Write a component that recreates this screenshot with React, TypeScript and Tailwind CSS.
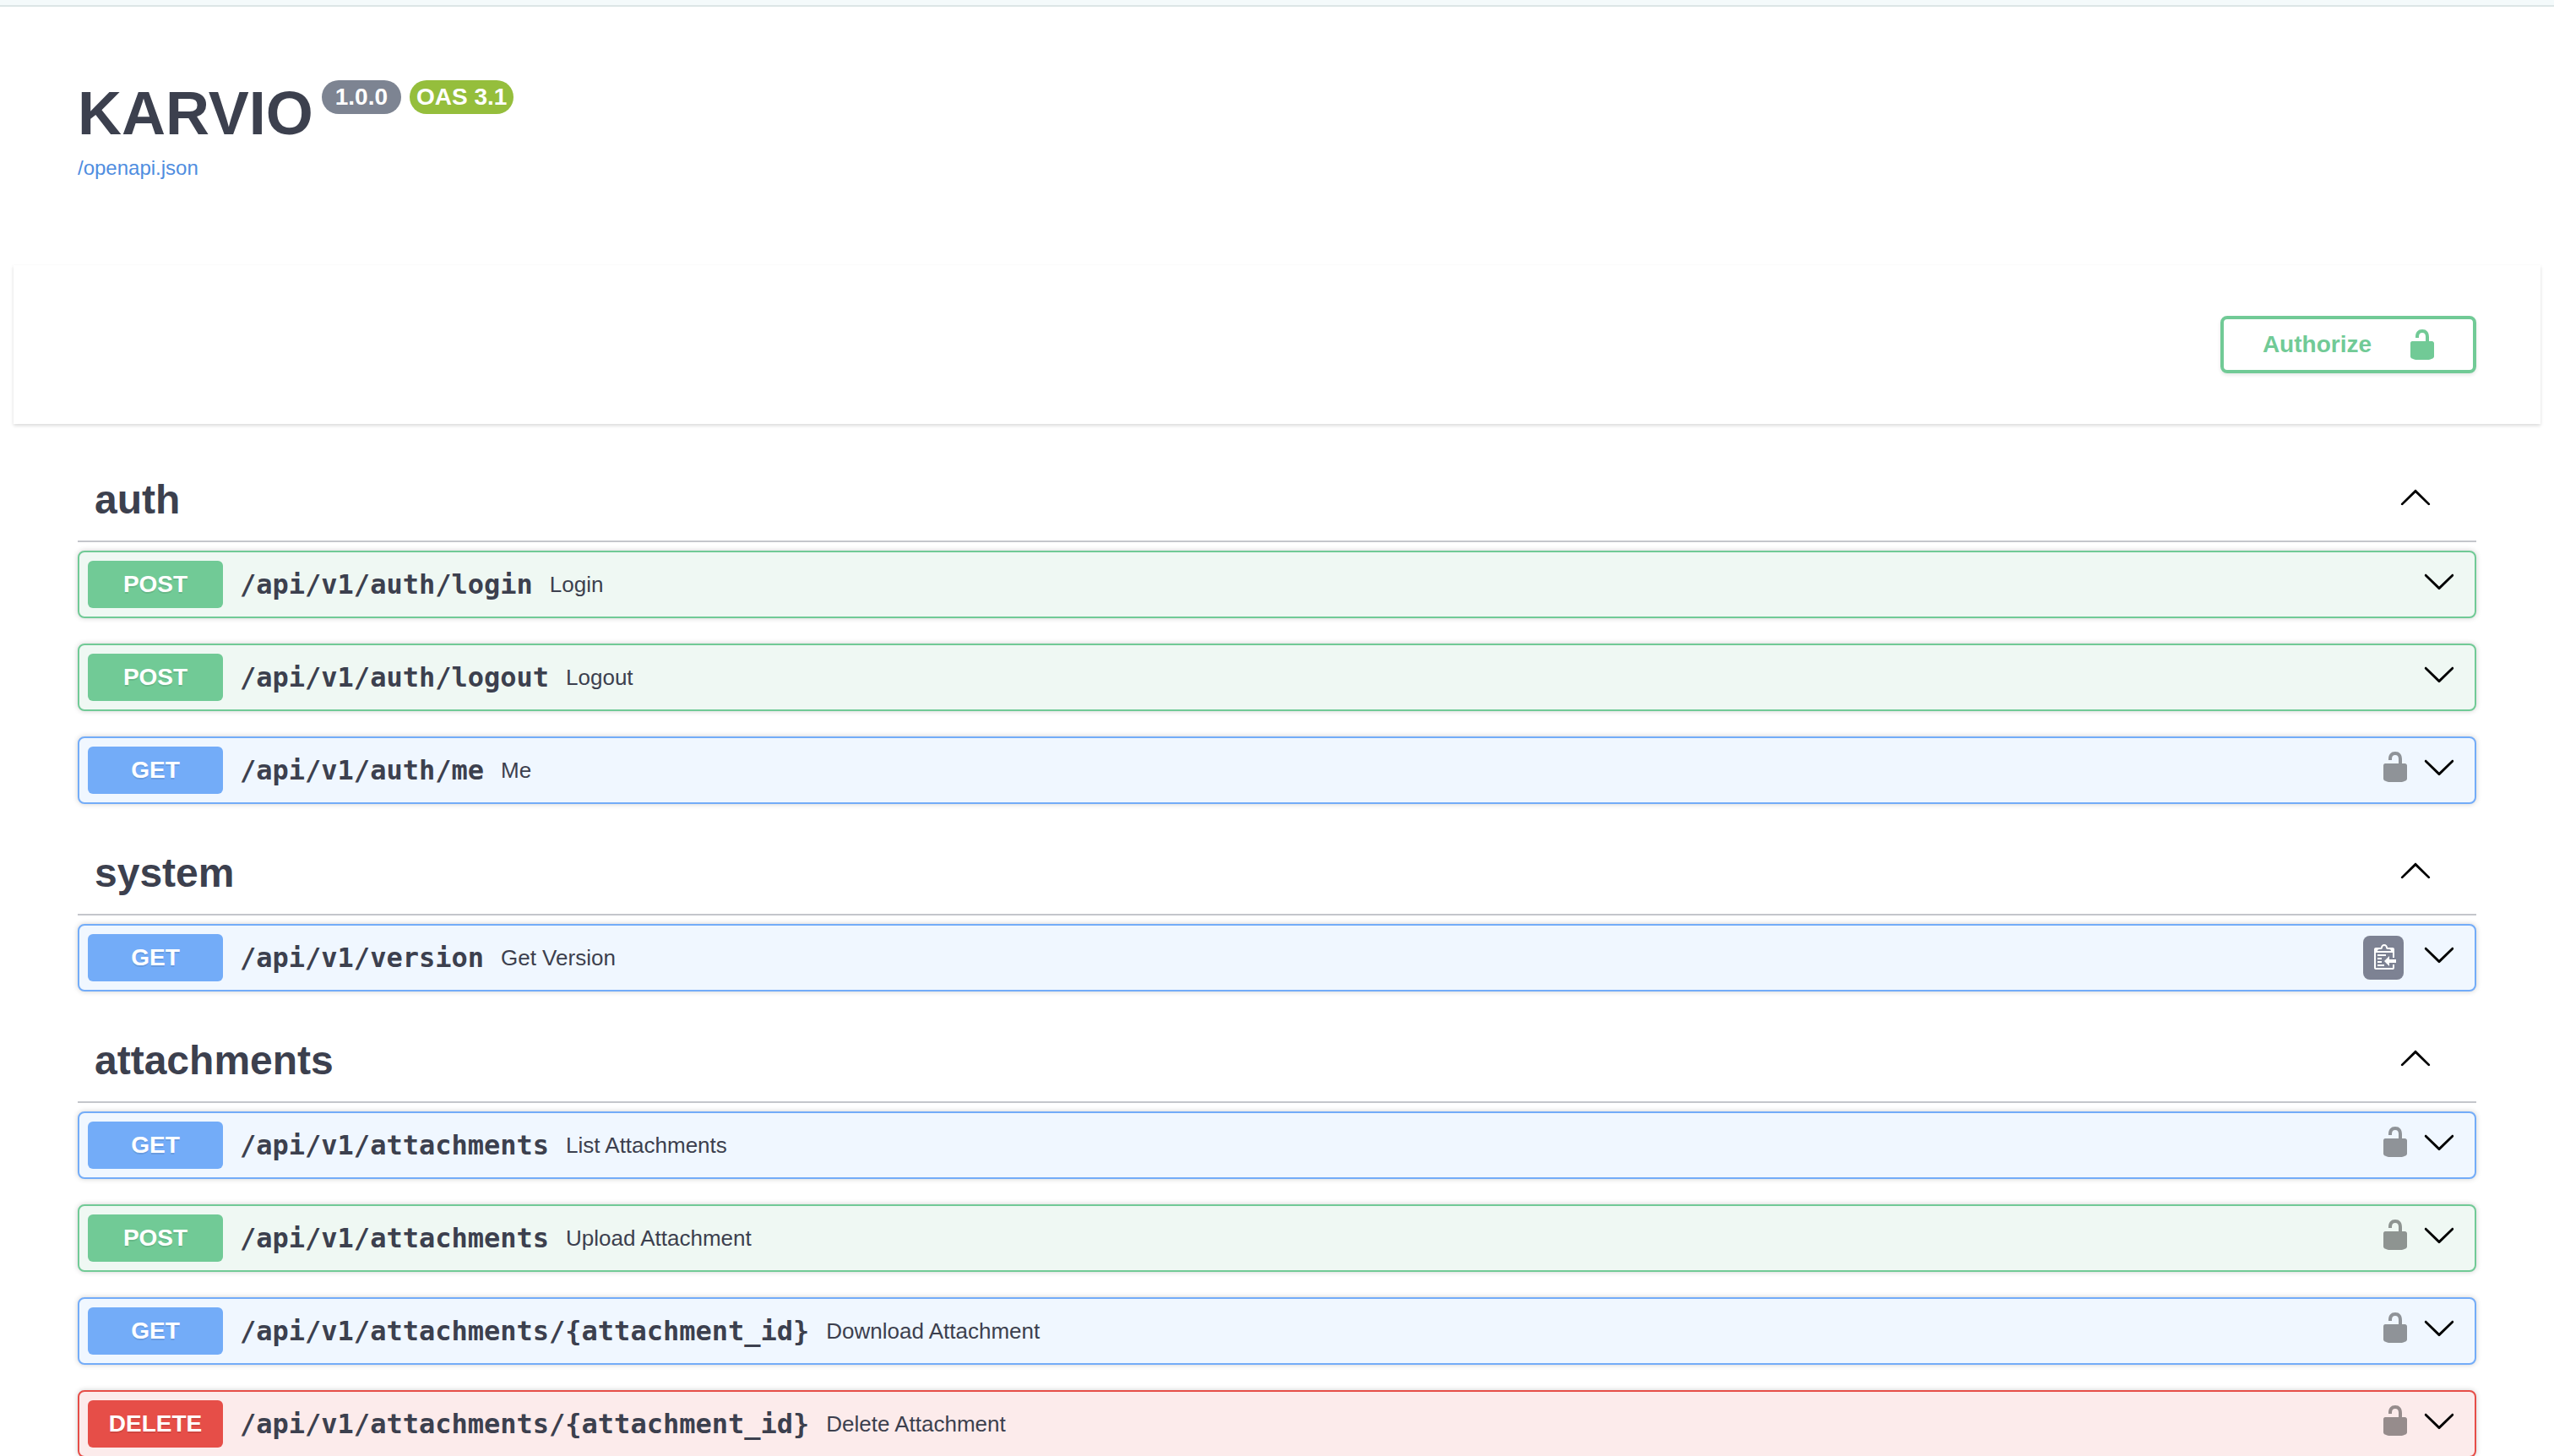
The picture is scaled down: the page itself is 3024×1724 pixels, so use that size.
import React, { useState } from 'react';
import clsx from 'clsx';

type Method = 'get' | 'post' | 'delete';

interface Operation {
  method: Method;
  path: string;
  summary: string;
  secured?: boolean;
  copyable?: boolean;
}

interface Tag {
  name: string;
  operations: Operation[];
}

const tags: Tag[] = [
  {
    name: 'auth',
    operations: [
      { method: 'post', path: '/api/v1/auth/login', summary: 'Login' },
      { method: 'post', path: '/api/v1/auth/logout', summary: 'Logout' },
      { method: 'get', path: '/api/v1/auth/me', summary: 'Me', secured: true },
    ],
  },
  {
    name: 'system',
    operations: [
      { method: 'get', path: '/api/v1/version', summary: 'Get Version', copyable: true },
    ],
  },
  {
    name: 'attachments',
    operations: [
      { method: 'get', path: '/api/v1/attachments', summary: 'List Attachments', secured: true },
      { method: 'post', path: '/api/v1/attachments', summary: 'Upload Attachment', secured: true },
      { method: 'get', path: '/api/v1/attachments/{attachment_id}', summary: 'Download Attachment', secured: true },
      { method: 'delete', path: '/api/v1/attachments/{attachment_id}', summary: 'Delete Attachment', secured: true },
    ],
  },
];

const rowStyles: Record<Method, string> = {
  get: 'border-[#73acf8] bg-[#f0f7ff]',
  post: 'border-[#71ca96] bg-[#eff8f3]',
  delete: 'border-[#e64e48] bg-[#fcebeb]',
};

const badgeStyles: Record<Method, string> = {
  get: 'bg-[#73acf8]',
  post: 'bg-[#71ca96]',
  delete: 'bg-[#e64e48]',
};

const UnlockedIcon: React.FC<{ className?: string }> = ({ className }) => (
  <svg viewBox="0 0 20 20" className={clsx('h-10 w-10', className)} fill="currentColor" aria-hidden="true">
    <path d="M15.8 8H14V5.6C14 2.703 12.665 1 10 1 7.334 1 6 2.703 6 5.6V6h2v-.801C8 3.754 8.797 3 10 3c1.203 0 2 .754 2 2.199V8H4c-.553 0-1 .646-1 1.199V17c0 .549.428 1.139.951 1.307l1.197.387C5.672 18.861 6.55 19 7.1 19h5.8c.549 0 1.428-.139 1.951-.307l1.196-.387c.524-.167.953-.757.953-1.306V9.199C17 8.646 16.352 8 15.8 8z" />
  </svg>
);

const ArrowUpIcon: React.FC = () => (
  <svg viewBox="0 0 20 20" className="h-10 w-10" fill="currentColor" aria-hidden="true">
    <path d="M17.418 14.908c.272.268.709.268.979 0s.271-.701 0-.969l-7.908-7.83c-.27-.268-.707-.268-.979 0l-7.908 7.83c-.27.268-.27.701 0 .969.271.268.709.268.979 0L10 7.767l7.418 7.141z" />
  </svg>
);

const ArrowDownIcon: React.FC = () => (
  <svg viewBox="0 0 20 20" className="h-10 w-10" fill="currentColor" aria-hidden="true">
    <path d="M17.418 6.109c.272-.268.709-.268.979 0s.271.701 0 .969l-7.908 7.83c-.27.268-.707.268-.979 0l-7.908-7.83c-.27-.268-.27-.701 0-.969.271-.268.709-.268.979 0L10 13.25l7.418-7.141z" />
  </svg>
);

const CopyIcon: React.FC = () => (
  <svg viewBox="0 0 15 16" className="h-8 w-[30px]" fill="currentColor" aria-hidden="true">
    <g transform="translate(2 -1)">
      <path d="M2 13h4v1H2v-1zm5-6H2v1h5V7zm2 3V8l-3 3 3 3v-2h5v-2H9zM4.5 9H2v1h2.5V9zM2 12h2.5v-1H2v1zm9 1h1v2c-.02.28-.11.52-.3.7-.19.18-.42.28-.7.3H1c-.55 0-1-.45-1-1V4c0-.55.45-1 1-1h3c0-1.11.89-2 2-2 1.11 0 2 .89 2 2h3c.55 0 1 .45 1 1v5h-1V6H1v9h10v-2zM2 5h8c0-.55-.45-1-1-1H8c-.55 0-1-.45-1-1s-.45-1-1-1-1 .45-1 1-.45 1-1 1H3c-.55 0-1 .45-1 1z" />
    </g>
  </svg>
);

const OperationRow: React.FC<{ operation: Operation }> = ({ operation }) => {
  const { method, path, summary, secured, copyable } = operation;

  return (
    <div
      className={clsx(
        'flex items-center rounded-lg border-2 p-[10px] pr-[22px] shadow-[0_0_6px_rgba(0,0,0,0.19)]',
        rowStyles[method]
      )}
    >
      <button type="button" className="flex min-w-0 flex-1 cursor-pointer items-center gap-5 text-left">
        <span
          className={clsx(
            'w-40 rounded-md text-center text-[28px] leading-[56px] font-bold text-white [text-shadow:0_2px_0_rgba(0,0,0,0.1)]',
            badgeStyles[method]
          )}
        >
          {method.toUpperCase()}
        </span>
        <span className="font-['DejaVu_Sans_Mono',monospace] text-[32px] leading-10 font-bold">{path}</span>
        <span className="text-[26px] leading-10">{summary}</span>
      </button>
      {copyable && (
        <button
          type="button"
          aria-label="Copy to clipboard"
          className="mr-[22px] flex h-[52px] w-12 cursor-pointer items-center justify-center rounded-lg bg-[#7d8293] text-white"
        >
          <CopyIcon />
        </button>
      )}
      {secured && (
        <button type="button" aria-label="Authorization button unlocked" className="mr-3 cursor-pointer pb-2 text-black opacity-40">
          <UnlockedIcon />
        </button>
      )}
      <button type="button" aria-label="Expand operation" className="cursor-pointer pb-2 text-black">
        <ArrowDownIcon />
      </button>
    </div>
  );
};

const TagSection: React.FC<{ tag: Tag }> = ({ tag }) => {
  const [isOpen, setIsOpen] = useState(true);

  return (
    <section>
      <h3 className="mb-[10px] border-b-2 border-[#c4c6cb]">
        <button
          type="button"
          aria-expanded={isOpen}
          onClick={() => setIsOpen(!isOpen)}
          className="flex w-full cursor-pointer items-center justify-between pt-[22px] pr-[52px] pb-[18px] pl-5 text-left"
        >
          <span className="text-5xl leading-[60px] font-bold">{tag.name}</span>
          <span className="pb-2 text-black">{isOpen ? <ArrowUpIcon /> : <ArrowDownIcon />}</span>
        </button>
      </h3>
      {isOpen && (
        <div className="flex flex-col gap-[30px] pb-[30px]">
          {tag.operations.map(op => (
            <OperationRow key={`${op.method} ${op.path}`} operation={op} />
          ))}
        </div>
      )}
    </section>
  );
};

const App: React.FC = () => {
  return (
    <div className="h-screen overflow-hidden bg-white font-['Liberation_Sans',Arial,sans-serif] text-[#3c404e]">
      <div className="h-2 border-b-2 border-[#dce5e6] bg-[#f4fafb]"></div>

      {/* API info */}
      <header className="px-[92px] pt-[84px] pb-[94px]">
        <div className="flex items-start gap-[10px]">
          <h2 className="text-7xl leading-[84px] font-bold">KARVIO</h2>
          <div className="flex gap-[10px] pt-[3px] text-[28px] leading-10 font-bold text-white">
            <span className="rounded-full bg-[#7d8492] px-4">1.0.0</span>
            <span className="rounded-full bg-[#95be3c] px-2">OAS 3.1</span>
          </div>
        </div>
        <a href="/openapi.json" className="mt-[2px] block w-fit text-2xl leading-[42px] text-[#4f8de0]">
          /openapi.json
        </a>
      </header>

      {/* Authorization bar */}
      <div className="mx-4 flex justify-end bg-white px-[76px] py-[60px] shadow-[0_2px_4px_rgba(0,0,0,0.15)]">
        <button
          type="button"
          className="flex cursor-pointer items-center gap-10 rounded-lg border-4 border-[#71ca96] pr-10 pl-[46px] text-[28px] leading-[60px] font-bold text-[#71ca96] shadow-[0_2px_4px_rgba(0,0,0,0.1)]"
        >
          Authorize
          <UnlockedIcon />
        </button>
      </div>

      <main className="px-[92px] pt-[38px]">
        {tags.map(tag => (
          <TagSection key={tag.name} tag={tag} />
        ))}
      </main>
    </div>
  );
};

export default App;
